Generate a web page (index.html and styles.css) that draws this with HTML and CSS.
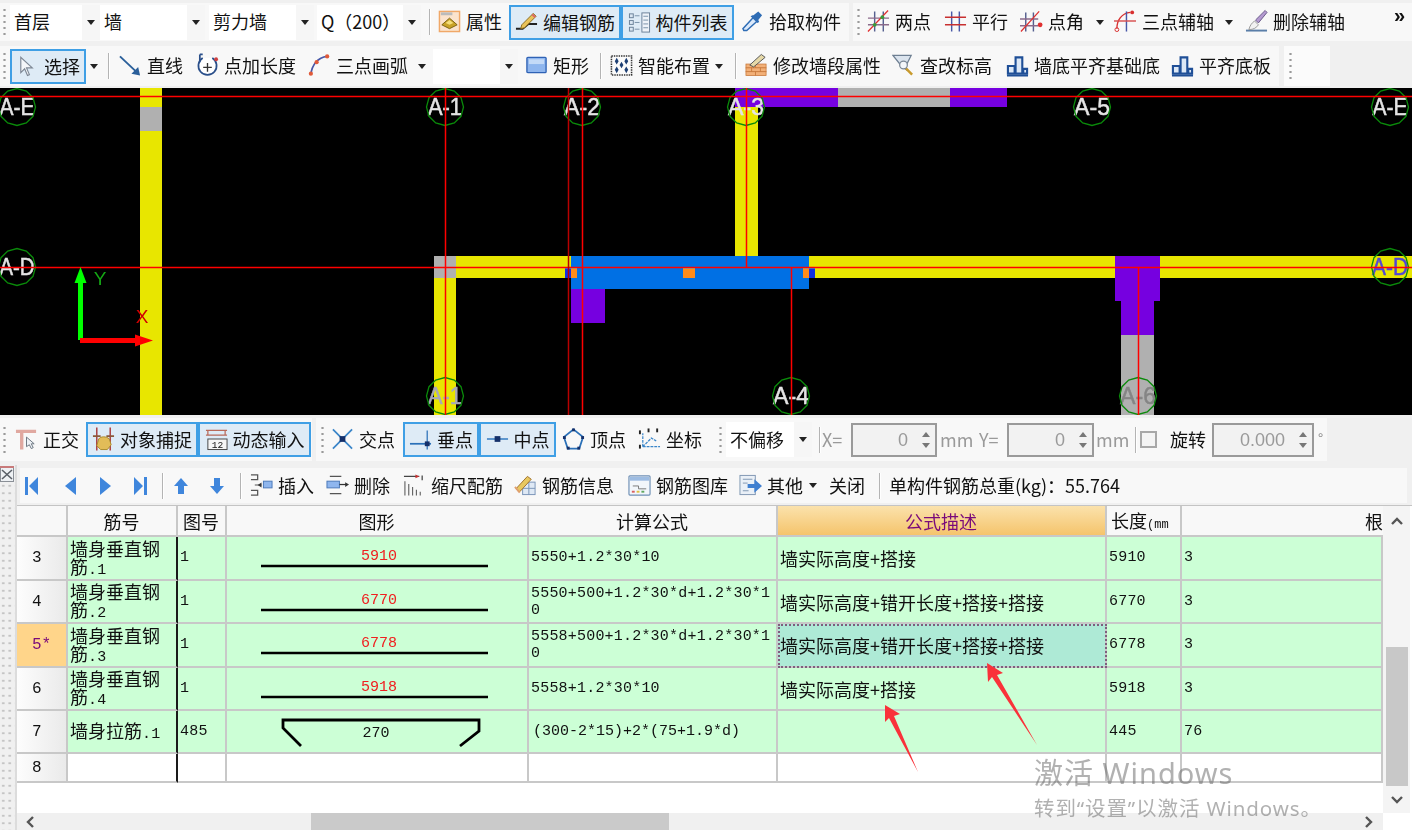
FILE: index.html
```html
<!DOCTYPE html>
<html lang="zh-CN">
<head>
<meta charset="utf-8">
<title>钢筋编辑</title>
<link rel="stylesheet" href="styles.css">
</head>
<body>
<svg class="sprite" xmlns="http://www.w3.org/2000/svg">
  <symbol id="i-prop" viewBox="0 0 24 24"><rect x="1.500" y="2" width="21" height="21" fill="#fbe3cd" stroke="#f0a868" stroke-width="1.500"/><rect x="3" y="3" width="12" height="3" fill="#bbb"/><path d="M4 16l8-7 8 7-8 4z" fill="#c9a227" stroke="#7a6212"/><path d="M8 14l4-3 4 3-4 2z" fill="#f4de7a"/></symbol>
  <symbol id="i-edit" viewBox="0 0 24 24"><path d="M1 19h7l6-5h9" fill="none" stroke="#222" stroke-width="2"/><path d="M7 15L19 3l3 3-12 12-4 1z" fill="#e9c35a" stroke="#8a6a1a"/><path d="M18 4l3 3" stroke="#d66" stroke-width="2"/></symbol>
  <symbol id="i-list" viewBox="0 0 24 24"><g fill="#dbe7f3" stroke="#6a8098"><rect x="1.500" y="3.500" width="4" height="4"/><rect x="1.500" y="10.500" width="4" height="4"/><rect x="1.500" y="17.500" width="4" height="4"/></g><rect x="14.500" y="2.500" width="8" height="20" fill="#eef3f9" stroke="#6a8098"/><path d="M7 5.500h5M7 12.500h5M7 19.500h5M16 6h5M16 10h5M16 14h5M16 18h5" stroke="#7890a8"/></symbol>
  <symbol id="i-pick" viewBox="0 0 24 24"><path d="M3 22l-1-2L13 8l4 4L6 22z" fill="#dbe9fa" stroke="#2f6db5" stroke-width="1.500"/><path d="M13 6l5-4 4 4-4 5 1 2-2 1-7-7 2-1z" fill="#2f6db5"/></symbol>
  <symbol id="i-two" viewBox="0 0 24 24"><path d="M8 2v21M17 2v21" stroke="#56608f" stroke-width="1.500"/><path d="M1 9h22M1 16h22" stroke="#8a6a8a" stroke-width="1.500"/><path d="M1 23L22 1" stroke="#e03030" stroke-width="1.300"/><circle cx="8" cy="16" r="2" fill="#3a9a3a"/><circle cx="16" cy="8" r="2" fill="#3a9a3a"/></symbol>
  <symbol id="i-par" viewBox="0 0 24 24"><path d="M8 2v21M16 2v21" stroke="#4858a8" stroke-width="1.500"/><path d="M1 8h22M1 16h22" stroke="#c83030" stroke-width="1.500"/></symbol>
  <symbol id="i-ang" viewBox="0 0 24 24"><path d="M6 3v20M14 3v20" stroke="#56608f" stroke-width="1.500"/><path d="M0 10h19M0 17h19" stroke="#8a6a8a" stroke-width="1.500"/><path d="M1 23L20 2" stroke="#e03030" stroke-width="1.300"/><circle cx="21" cy="16" r="2.500" fill="#e03030"/></symbol>
  <symbol id="i-aux" viewBox="0 0 24 24"><path d="M3 20C3 11 8 4 17 3" fill="none" stroke="#d83030" stroke-width="1.500"/><circle cx="3" cy="21" r="2" fill="none" stroke="#d83030"/><circle cx="19" cy="3" r="2" fill="#d83030"/><path d="M13 2v21" stroke="#4858a8" stroke-width="1.500"/><path d="M0 12h23" stroke="#d85050" stroke-width="1.500"/></symbol>
  <symbol id="i-del" viewBox="0 0 24 24"><path d="M1 22h22" stroke="#5a7ea8" stroke-width="2"/><path d="M4 21c1-4 3-7 6-9l4 4c-2 3-5 5-10 5z" fill="#f2f2f2" stroke="#9a9a9a"/><path d="M11 11L21 1l2 2-9 11z" fill="#b49ad0" stroke="#6a5a8a"/></symbol>
  <symbol id="i-sel" viewBox="0 0 24 24"><path d="M5 3v16l4-4 3 7 2-1-3-7h6z" fill="#f4f6f9" stroke="#7d8794" stroke-width="1.200"/></symbol>
  <symbol id="i-line" viewBox="0 0 24 24"><path d="M1 3l18 17" stroke="#2a5f9a" stroke-width="2"/><path d="M22 23l-9-2 7-7z" fill="#2a5f9a"/></symbol>
  <symbol id="i-plen" viewBox="0 0 24 24"><path d="M7 4.800A9.500 9.500 0 1 0 17 4.800" fill="#fff" stroke="#2a4f8a" stroke-width="1.800"/><path d="M12 10v9M7.500 14.500h9" stroke="#333" stroke-width="1.400"/><path d="M4 1v8M4 1h3" stroke="#2a4f8a" stroke-width="1.800"/><circle cx="21" cy="6" r="2" fill="#d04040"/></symbol>
  <symbol id="i-arc" viewBox="0 0 24 24"><path d="M3 22C4 12 10 4 20 3" fill="none" stroke="#4858a8" stroke-width="1.800"/><circle cx="3" cy="21" r="2.200" fill="#e05a3a"/><circle cx="9" cy="9" r="2.200" fill="#e05a3a"/><circle cx="20" cy="3" r="2.200" fill="#e05a3a"/></symbol>
  <symbol id="i-rect" viewBox="0 0 24 24"><rect x="2" y="4" width="20" height="16" rx="1" fill="#8fb6ee" stroke="#2f62b5" stroke-width="1.400"/><rect x="4" y="6" width="16" height="5" fill="#c4daf7"/></symbol>
  <symbol id="i-smart" viewBox="0 0 24 24"><rect x="1.500" y="2.500" width="21" height="20" fill="#fbfbfb" stroke="#333" stroke-width="1.600" stroke-dasharray="1.500 1"/><path d="M7 4.500l2 3.500-2 3.500L5 8zM17 4.500l2 3.500-2 3.500L15 8zM7 13.500l2 3.500-2 3.500L5 17zM17 13.500l2 3.500-2 3.500L15 17zM12 8.500l2 3.500-2 3.500-2-3.500z" fill="#1d3f73"/></symbol>
  <symbol id="i-wall" viewBox="0 0 24 24"><g fill="#f2b078" stroke="#c8783a" stroke-width=".8"><rect x="1" y="11" width="10" height="4"/><rect x="11" y="11" width="11" height="4"/><rect x="1" y="15" width="6" height="4"/><rect x="7" y="15" width="9" height="4"/><rect x="16" y="15" width="6" height="4"/><rect x="1" y="19" width="10" height="4"/><rect x="11" y="19" width="11" height="4"/></g><path d="M5 12L17 1l4 3L9 14z" fill="#e6d9a8" stroke="#555"/></symbol>
  <symbol id="i-elev" viewBox="0 0 24 24"><path d="M1 2h19l-5 10v5l-6-5z" fill="#dbe4ee" stroke="#6e7f92" stroke-width="1.300"/><path d="M14 15l7 7" stroke="#c89a2c" stroke-width="2.600"/><circle cx="12" cy="12" r="4" fill="#f3f6fa" stroke="#7a8796" stroke-width="1.300"/></symbol>
  <symbol id="i-align" viewBox="0 0 24 24"><path d="M1 23h22" stroke="#1f4f97" stroke-width="2"/><path d="M2 21v-8h7v8zM10 21V4h7v17zM18 21v-5h4v5z" fill="#dce8f6" stroke="#1f4f97" stroke-width="2.200"/></symbol>
  <symbol id="i-ortho" viewBox="0 0 24 24"><path d="M1 4h21M7 4v19" stroke="#e0a8a0" stroke-width="3.500"/><path d="M12 10v10l3-2 2 4 2-1-2-4h3z" fill="#eef2f6" stroke="#6a7480"/></symbol>
  <symbol id="i-snap" viewBox="0 0 24 24"><path d="M5 0v24M19 0v24" stroke="#a83a3a" stroke-width="1.500"/><path d="M1 9h8M15 9h8" stroke="#8a5a3a" stroke-width="2"/><path d="M7 12c2-3 8-3 11 0l2 6-4 5H9l-4-4z" fill="#e2bc58" stroke="#a98a2c"/></symbol>
  <symbol id="i-dyn" viewBox="0 0 24 24"><path d="M1 3h22M1 8h22M3 3v5M21 3v5" stroke="#b86a5a" stroke-width="1.300"/><rect x="3" y="12" width="20" height="11" fill="#f6f6f6" stroke="#444"/><text x="13" y="21.500" font-size="10" text-anchor="middle" font-family="Liberation Mono, monospace" fill="#111">12</text></symbol>
  <symbol id="i-cross" viewBox="0 0 24 24"><path d="M2 2l20 20M22 2L2 22" stroke="#3b86c9" stroke-width="1.800"/><rect x="9" y="9" width="6" height="6" fill="#15306a"/></symbol>
  <symbol id="i-perp" viewBox="0 0 24 24"><path d="M1 17h22" stroke="#2a70b8" stroke-width="1.800"/><path d="M19 3v20" stroke="#2a70b8" stroke-width="1.300"/><rect x="16.500" y="14.500" width="5" height="5" fill="#15306a"/></symbol>
  <symbol id="i-mid" viewBox="0 0 24 24"><path d="M1 12h22" stroke="#4a8ac8" stroke-width="1.800"/><rect x="9" y="9" width="6" height="6" fill="#15306a"/></symbol>
  <symbol id="i-vert" viewBox="0 0 24 24"><path d="M12 2l10 8-4 12H6L2 10z" fill="none" stroke="#2a70b8" stroke-width="1.800"/><g fill="#15306a"><rect x="10.500" y="1" width="3" height="3"/><rect x="1" y="9" width="3" height="3"/><rect x="20" y="9" width="3" height="3"/><rect x="5" y="20" width="3" height="3"/><rect x="16" y="20" width="3" height="3"/></g></symbol>
  <symbol id="i-coord" viewBox="0 0 24 24"><path d="M5 20h18M5 20V6M5 20l9-9 5 3" fill="none" stroke="#3b86c9" stroke-width="1.300" stroke-dasharray="3 1"/><g fill="#222"><rect x="1" y="3" width="2" height="4"/><rect x="10" y="1" width="2" height="4"/><rect x="19" y="1" width="2" height="4"/><rect x="1" y="18" width="2" height="4"/></g></symbol>
  <symbol id="i-ins" viewBox="0 0 24 24"><path d="M1 1.500h7v5H1M1 17.500h7v5H1M5 12h7" fill="none" stroke="#555" stroke-width="1.300"/><path d="M8 12l4-2.500v5z" fill="#333"/><rect x="14" y="8" width="9" height="7" fill="#8fb6ee" stroke="#4a78b8"/></symbol>
  <symbol id="i-rem" viewBox="0 0 24 24"><path d="M4 3h12M4 21h12" stroke="#555" stroke-width="1.300"/><rect x="1" y="8" width="13" height="7" fill="#8fb6ee" stroke="#4a78b8"/><path d="M14 11.500h7" stroke="#333" stroke-width="1.300"/><path d="M24 11.500l-4-2.500v5z" fill="#333"/></symbol>
  <symbol id="i-scale" viewBox="0 0 24 24"><path d="M1 3h16M20 2v5" stroke="#444" stroke-width="1.300"/><path d="M17 3l-4-2v4z" fill="#c83030"/><path d="M2 8v15M6 11v12M10 14v9M14 17v6M18 19v4" stroke="#666" stroke-width="1.200"/></symbol>
  <symbol id="i-info" viewBox="0 0 24 24"><rect x="9" y="9" width="13" height="13" fill="#dfe9f5" stroke="#7a94b8"/><path d="M15.500 9v13M9 15.500h13" stroke="#7a94b8"/><path d="M2 16L14 3l4 3L6 19z" fill="#e8c860" stroke="#a0702a"/><path d="M1 14l5 6" stroke="#e0a070" stroke-width="2"/></symbol>
  <symbol id="i-lib" viewBox="0 0 24 24"><rect x="1" y="2.500" width="22" height="20" rx="1" fill="#f2f6fb" stroke="#6e8fb5" stroke-width="1.200"/><rect x="2" y="3.500" width="20" height="4" fill="#9dbce2"/><path d="M5 13h6v3h8" fill="none" stroke="#777"/><path d="M4 19h3" stroke="#d86060" stroke-width="2"/><path d="M9 19h3" stroke="#e0c040" stroke-width="2"/><path d="M14 19h3" stroke="#60a860" stroke-width="2"/></symbol>
  <symbol id="i-other" viewBox="0 0 24 24"><rect x="1" y="2" width="16" height="20" fill="#eaf0f7" stroke="#7f96b2"/><path d="M4 6h10M4 10h5M4 18h6" stroke="#7f96b2"/><path d="M9 11h7V6l8 7-8 7v-5H9z" fill="#3f7fd0"/></symbol>
  <symbol id="i-first" viewBox="0 0 13 18"><path d="M0 0h3v18H0zM13 0v18L4 9z" fill="#3f86dc"/></symbol>
  <symbol id="i-prev" viewBox="0 0 11 18"><path d="M11 0v18L0 9z" fill="#3f86dc"/></symbol>
  <symbol id="i-next" viewBox="0 0 11 18"><path d="M0 0v18L11 9z" fill="#3f86dc"/></symbol>
  <symbol id="i-last" viewBox="0 0 13 18"><path d="M0 0v18L9 9zM10 0h3v18h-3z" fill="#3f86dc"/></symbol>
  <symbol id="i-up" viewBox="0 0 14 16"><path d="M7 0l7 8H10v8H4V8H0z" fill="#3f86dc"/></symbol>
  <symbol id="i-down" viewBox="0 0 14 16"><path d="M7 16l7-8H10V0H4v8H0z" fill="#3f86dc"/></symbol>
  <symbol id="i-closex" viewBox="0 0 14 16"><rect x=".5" y=".5" width="13" height="15" fill="#eef1f4" stroke="#8a8f96"/><path d="M2 4l10 9M12 4L2 13" stroke="#5a6068" stroke-width="1.600"/><path d="M0 1h14" stroke="#c87a7a" stroke-width="2"/></symbol>
  <symbol id="axis" viewBox="-19 -19 38 38" overflow="visible"><polygon points="18.500,0 16,9.300 9.300,16 0,18.500 -9.300,16 -16,9.300 -18.500,0 -16,-9.300 -9.300,-16 0,-18.500 9.300,-16 16,-9.300" fill="none" stroke="#0a8a0a" stroke-width="1.300"/></symbol>
</svg>

<div class="app">
  <header class="top">
    <div class="row row-a">
      <div class="strip strip-a1">
        <span class="grip ml3"></span>
        <div class="combo w90 ml4"><span class="combo-t">首层</span><span class="combo-d"><i class="caret"></i></span></div>
        <div class="combo w105"><span class="combo-t">墙</span><span class="combo-d"><i class="caret"></i></span></div>
        <div class="combo w105 ml4"><span class="combo-t">剪力墙</span><span class="combo-d"><i class="caret"></i></span></div>
        <div class="combo w104 ml3"><span class="combo-t">Q（200）</span><span class="combo-d"><i class="caret"></i></span></div>
        <span class="sep ml8"></span>
        <div class="tool ml7"><svg class="ic"><use href="#i-prop"/></svg>属性</div>
        <div class="tool on w112 ml7"><svg class="ic"><use href="#i-edit"/></svg>编辑钢筋</div>
        <div class="tool on w113"><svg class="ic"><use href="#i-list"/></svg>构件列表</div>
        <div class="tool ml7"><svg class="ic"><use href="#i-pick"/></svg>拾取构件</div>
      </div>
      <div class="strip strip-a2 ml4">
        <span class="grip ml4"></span>
        <div class="tool ml7"><svg class="ic"><use href="#i-two"/></svg>两点</div>
        <div class="tool ml13"><svg class="ic"><use href="#i-par"/></svg>平行</div>
        <div class="tool ml12"><svg class="ic"><use href="#i-ang"/></svg>点角</div>
        <i class="caret ml12"></i>
        <div class="tool ml10"><svg class="ic"><use href="#i-aux"/></svg>三点辅轴</div>
        <i class="caret ml11"></i>
        <div class="tool ml12"><svg class="ic"><use href="#i-del"/></svg>删除辅轴</div>
        <span class="more">»</span>
      </div>
    </div>
    <div class="row row-b">
      <div class="strip strip-b1">
        <span class="grip ml3"></span>
        <div class="tool on w76 ml4"><svg class="ic"><use href="#i-sel"/></svg>选择</div>
        <i class="caret ml4"></i>
        <span class="sep ml10"></span>
        <div class="tool ml9"><svg class="ic"><use href="#i-line"/></svg>直线</div>
        <div class="tool ml13"><svg class="ic"><use href="#i-plen"/></svg>点加长度</div>
        <div class="tool ml12"><svg class="ic"><use href="#i-arc"/></svg>三点画弧</div>
        <i class="caret ml10"></i>
        <div class="combo w85 ml7"><span class="combo-t"></span><span class="combo-d"><i class="caret"></i></span></div>
        <div class="tool ml7"><svg class="ic"><use href="#i-rect"/></svg>矩形</div>
        <span class="sep ml11"></span>
        <div class="tool ml8"><svg class="ic"><use href="#i-smart"/></svg>智能布置</div>
        <i class="caret ml5"></i>
        <span class="sep ml12"></span>
        <div class="tool ml8"><svg class="ic"><use href="#i-wall"/></svg>修改墙段属性</div>
        <div class="tool ml11"><svg class="ic"><use href="#i-elev"/></svg>查改标高</div>
        <div class="tool ml14"><svg class="ic"><use href="#i-align"/></svg>墙底平齐基础底</div>
        <div class="tool ml11"><svg class="ic"><use href="#i-align"/></svg>平齐底板</div>
      </div>
      <div class="strip strip-b2 ml5"><span class="grip ml5"></span></div>
    </div>
  </header>

  <svg class="canvas" xmlns="http://www.w3.org/2000/svg" viewBox="0 0 1412 327" width="1412" height="327">
    <rect width="1412" height="327" fill="#000"/>
    <g fill="#e8e600">
      <rect x="140" y="0" width="22" height="327"/>
      <rect x="434" y="168" width="22" height="159"/>
      <rect x="434" y="168" width="137" height="22"/>
      <rect x="735" y="19" width="23" height="149"/>
      <rect x="809" y="168" width="603" height="22"/>
    </g>
    <g fill="#b0b0b0">
      <rect x="140" y="19" width="22" height="24"/>
      <rect x="434" y="168" width="22" height="22"/>
      <rect x="838" y="0" width="112" height="19"/>
      <rect x="1121" y="247" width="33" height="80"/>
    </g>
    <g fill="#7600e0">
      <rect x="735" y="0" width="103" height="19"/>
      <rect x="950" y="0" width="57" height="19"/>
      <rect x="571" y="201" width="34" height="34"/>
      <rect x="1115" y="168" width="45" height="45"/>
      <rect x="1121" y="213" width="33" height="34"/>
    </g>
    <rect x="571" y="168" width="238" height="33" fill="#0070e4"/>
    <g fill="#ff8c1a">
      <rect x="571" y="179" width="6" height="11"/>
      <rect x="683" y="179" width="12" height="11"/>
      <rect x="803" y="179" width="6" height="11"/>
    </g>
    <rect x="565" y="179" width="6" height="11" fill="#1030e0"/>
    <rect x="809" y="179" width="6" height="11" fill="#1030e0"/>
    <g fill="#20e0f0">
      <rect x="565" y="179" width="12" height="1.500"/>
      <rect x="683" y="179" width="12" height="1.500"/>
      <rect x="803" y="179" width="12" height="1.500"/>
    </g>

    <g class="cad-label">
      <text x="17" y="27" textLength="35" lengthAdjust="spacingAndGlyphs">A-E</text>
      <text x="445" y="27" textLength="34" lengthAdjust="spacingAndGlyphs">A-1</text>
      <text x="582" y="27" textLength="36" lengthAdjust="spacingAndGlyphs">A-2</text>
      <text x="746" y="27" textLength="36" lengthAdjust="spacingAndGlyphs">A-3</text>
      <text x="1092" y="27" textLength="36" lengthAdjust="spacingAndGlyphs">A-5</text>
      <text x="1390" y="27" textLength="35" lengthAdjust="spacingAndGlyphs">A-E</text>
      <text x="17" y="187" textLength="35" lengthAdjust="spacingAndGlyphs">A-D</text>
      <text x="791" y="316" textLength="36" lengthAdjust="spacingAndGlyphs">A-4</text>
      <text x="445" y="316" textLength="34" lengthAdjust="spacingAndGlyphs" class="cad-grey">A-1</text>
      <text x="1138" y="316" textLength="36" lengthAdjust="spacingAndGlyphs" class="cad-dim">A-6</text>
      <text x="1390" y="187" textLength="36" lengthAdjust="spacingAndGlyphs" class="cad-blue">A-D</text>
    </g>
    <g>
      <use href="#axis" x="-2" y="0" width="38" height="38"/>
      <use href="#axis" x="426" y="0" width="38" height="38"/>
      <use href="#axis" x="563" y="0" width="38" height="38"/>
      <use href="#axis" x="727" y="0" width="38" height="38"/>
      <use href="#axis" x="1073" y="0" width="38" height="38"/>
      <use href="#axis" x="1371" y="0" width="38" height="38"/>
      <use href="#axis" x="-2" y="160" width="38" height="38"/>
      <use href="#axis" x="1371" y="160" width="38" height="38"/>
      <use href="#axis" x="426" y="289" width="38" height="38"/>
      <use href="#axis" x="772" y="289" width="38" height="38"/>
      <use href="#axis" x="1119" y="289" width="38" height="38"/>
    </g>
    <g stroke="#ff0000" stroke-width="1.500">
      <path d="M0 8.500h1412M0 179.500h1412"/>
      <path d="M445.500 0v327M582.500 0v327M746.500 0v179M791.500 179v148M1138.500 179v148"/>
    </g>
    <path d="M568.500 0v327" stroke="#b80000" stroke-width="1.500"/>

    <path d="M78 252V194h5v58z" fill="#00ff00"/>
    <path d="M80.500 179l6 16h-12z" fill="#00ff00"/>
    <path d="M80 250h56v5H80z" fill="#ff0000"/>
    <path d="M153 252.500l-18 6v-12z" fill="#ff0000"/>
    <text class="axis-y" x="100" y="197">Y</text>
    <text class="axis-x" x="142" y="235">X</text>
  </svg>

  <section class="snapbar">
    <div class="strip strip-s1">
      <span class="grip ml3"></span>
      <div class="tool ml9"><svg class="ic"><use href="#i-ortho"/></svg>正交</div>
      <div class="tool on w112 ml7"><svg class="ic"><use href="#i-snap"/></svg>对象捕捉</div>
      <div class="tool on w113"><svg class="ic"><use href="#i-dyn"/></svg>动态输入</div>
    </div>
    <div class="strip strip-s2 ml4">
      <span class="grip ml5"></span>
      <div class="tool ml7"><svg class="ic"><use href="#i-cross"/></svg>交点</div>
      <div class="tool on w76 ml8"><svg class="ic"><use href="#i-perp"/></svg>垂点</div>
      <div class="tool on w77"><svg class="ic"><use href="#i-mid"/></svg>中点</div>
      <div class="tool ml6"><svg class="ic"><use href="#i-vert"/></svg>顶点</div>
      <div class="tool ml12"><svg class="ic"><use href="#i-coord"/></svg>坐标</div>
      <span class="grip ml17"></span>
      <div class="combo w86 ml4"><span class="combo-t">不偏移</span><span class="combo-d"><i class="caret"></i></span></div>
      <span class="sep ml7"></span>
      <span class="dim w25 ml1">X=</span>
      <div class="spin w86 ml4"><span class="spin-v">0</span><span class="spin-b"><i class="up"></i><i class="dn"></i></span></div>
      <span class="dim w32 ml3">mm</span>
      <span class="dim w24 ml7">Y=</span>
      <div class="spin w87 ml4"><span class="spin-v">0</span><span class="spin-b"><i class="up"></i><i class="dn"></i></span></div>
      <span class="dim w32 ml2">mm</span>
      <span class="sep ml7"></span>
      <span class="check ml3"></span>
      <span class="label ml13">旋转</span>
      <div class="spin w102 ml6"><span class="spin-v">0.000</span><span class="spin-b"><i class="up"></i><i class="dn"></i></span></div>
      <span class="deg ml4">°</span>
    </div>
  </section>

  <section class="dock">
    <aside class="dock-grip"><svg class="dock-x"><use href="#i-closex"/></svg></aside>
    <div class="dock-main">
      <div class="strip strip-nav ml3">
        <svg class="nav w13 ml5"><use href="#i-first"/></svg>
        <svg class="nav w11 ml27"><use href="#i-prev"/></svg>
        <svg class="nav w11 ml24"><use href="#i-next"/></svg>
        <svg class="nav w13 ml23"><use href="#i-last"/></svg>
        <span class="sep ml15"></span>
        <svg class="nav w14 ml10"><use href="#i-up"/></svg>
        <svg class="nav w14 ml22"><use href="#i-down"/></svg>
        <span class="sep ml16"></span>
        <div class="tool ml8"><svg class="ic"><use href="#i-ins"/></svg>插入</div>
        <div class="tool ml12"><svg class="ic"><use href="#i-rem"/></svg>删除</div>
        <div class="tool ml13"><svg class="ic"><use href="#i-scale"/></svg>缩尺配筋</div>
        <div class="tool ml11"><svg class="ic"><use href="#i-info"/></svg>钢筋信息</div>
        <div class="tool ml14"><svg class="ic"><use href="#i-lib"/></svg>钢筋图库</div>
        <div class="tool ml11"><svg class="ic"><use href="#i-other"/></svg>其他</div>
        <i class="caret ml6"></i>
        <div class="tool ml12">关闭</div>
        <span class="sep ml14"></span>
        <span class="label total ml8">单构件钢筋总重(kg)：55.764</span>
      </div>

      <div class="grid-frame">
        <div class="grid-body">
          <div class="grid-view">
            <table class="sheet">
              <colgroup>
                <col class="c0"><col class="c1"><col class="c2"><col class="c3"><col class="c4"><col class="c5"><col class="c6"><col class="c7">
              </colgroup>
              <thead>
                <tr>
                  <th></th><th>筋号</th><th>图号</th><th>图形</th><th>计算公式</th>
                  <th class="active">公式描述</th>
                  <th class="th-left">长度<small>(mm</small></th>
                  <th class="th-right">根</th>
                </tr>
              </thead>
              <tbody>
                <tr class="r44">
                  <td class="rh">3</td><td class="name">墙身垂直钢筋<span class="n">.1</span></td><td class="n">1</td>
                  <td class="shape"><svg viewBox="0 0 300 42" width="300" height="42"><text class="dim-red" x="152" y="23">5910</text><path d="M34 29h227" stroke="#000" stroke-width="2.600"/></svg></td>
                  <td class="n">5550+1.2*30*10</td><td>墙实际高度+搭接</td><td class="n">5910</td><td class="n">3</td>
                </tr>
                <tr class="r43">
                  <td class="rh">4</td><td class="name">墙身垂直钢筋<span class="n">.2</span></td><td class="n">1</td>
                  <td class="shape"><svg viewBox="0 0 300 41" width="300" height="41"><text class="dim-red" x="152" y="23">6770</text><path d="M34 29h227" stroke="#000" stroke-width="2.600"/></svg></td>
                  <td class="n formula">5550+500+1.2*30*d+1.2*30*10</td><td>墙实际高度+错开长度+搭接+搭接</td><td class="n">6770</td><td class="n">3</td>
                </tr>
                <tr class="r44">
                  <td class="rh cur">5*</td><td class="name">墙身垂直钢筋<span class="n">.3</span></td><td class="n">1</td>
                  <td class="shape"><svg viewBox="0 0 300 42" width="300" height="42"><text class="dim-red" x="152" y="23">6778</text><path d="M34 29h227" stroke="#000" stroke-width="2.600"/></svg></td>
                  <td class="n formula">5558+500+1.2*30*d+1.2*30*10</td><td class="focus">墙实际高度+错开长度+搭接+搭接</td><td class="n">6778</td><td class="n">3</td>
                </tr>
                <tr class="r43">
                  <td class="rh">6</td><td class="name">墙身垂直钢筋<span class="n">.4</span></td><td class="n">1</td>
                  <td class="shape"><svg viewBox="0 0 300 41" width="300" height="41"><text class="dim-red" x="152" y="23">5918</text><path d="M34 29h227" stroke="#000" stroke-width="2.600"/></svg></td>
                  <td class="n">5558+1.2*30*10</td><td>墙实际高度+搭接</td><td class="n">5918</td><td class="n">3</td>
                </tr>
                <tr class="r43">
                  <td class="rh">7</td><td class="name">墙身拉筋<span class="n">.1</span></td><td class="n">485</td>
                  <td class="shape"><svg viewBox="0 0 300 41" width="300" height="41"><path d="M74 35L56 17V9h196v11l-19 15" fill="none" stroke="#000" stroke-width="2.800"/><text class="dim-blk" x="149" y="26">270</text></svg></td>
                  <td class="n tight">(300-2*15)+2*(75+1.9*d)</td><td></td><td class="n">445</td><td class="n">76</td>
                </tr>
                <tr class="r29 blank">
                  <td class="rh">8</td><td class="name"></td><td></td><td></td><td></td><td></td><td></td><td></td>
                </tr>
              </tbody>
            </table>
          </div>
          <div class="vscroll">
            <svg class="chev chev-up" viewBox="0 0 14 10"><path d="M2 8l5-5 5 5" fill="none" stroke="#555" stroke-width="2.400"/></svg>
            <div class="thumb-v"></div>
            <svg class="chev chev-dn" viewBox="0 0 14 10"><path d="M2 2l5 5 5-5" fill="none" stroke="#555" stroke-width="2.400"/></svg>
          </div>
        </div>
        <div class="hscroll">
          <svg class="chev-h chev-l" viewBox="0 0 10 14"><path d="M8 2L3 7l5 5" fill="none" stroke="#555" stroke-width="2.400"/></svg>
          <div class="thumb-h"></div>
          <svg class="chev-h chev-r" viewBox="0 0 10 14"><path d="M2 2l5 5-5 5" fill="none" stroke="#555" stroke-width="2.400"/></svg>
        </div>
      </div>
    </div>
  </section>

  <svg class="marks" xmlns="http://www.w3.org/2000/svg" viewBox="0 0 1412 830" width="1412" height="830">
    <polygon points="987,663 1003,673 997,675 1037,745 992,677 988,682" fill="#f9323a"/>
    <polygon points="885,705 900,714 894,716 918,772 889,718 885,722" fill="#f9323a"/>
  </svg>
  <div class="watermark">
    <div class="wm-1">激活 Windows</div>
    <div class="wm-2">转到“设置”以激活 Windows。</div>
  </div>
</div>
</body>
</html>
```

FILE: styles.css
```css
* { box-sizing: border-box; }
html, body { margin: 0; padding: 0; height: 100%; overflow: hidden; background: #f0f0f0; }
body {
  font-family: "Noto Sans CJK SC", "Noto Sans", "Liberation Sans", sans-serif;
  font-size: 18px;
  color: #111;
}
.sprite { display: none; }
.app { position: relative; width: 1412px; height: 830px; overflow: hidden; filter: blur(.3px); }

/* toolbars */
.top { padding-top: 3px; height: 88px; }
.row { display: flex; }
.row-a { height: 38px; }
.row-b { height: 42px; margin-top: 5px; padding-bottom: 2px; }
.strip { display: flex; align-items: center; background: #f8f8f8; height: 100%; white-space: nowrap; line-height: 1; }
.strip-a1 { width: 849px; }
.strip-a2 { width: 559px; }
.strip-b1 { width: 1279px; }
.strip-b2 { width: 46px; background: #fbfbfb; }
.grip {
  flex: none; width: 3px; height: 30px;
  background: radial-gradient(circle, #9a9a9a 1px, transparent 1.300px) 0 0 / 3px 6px;
}
.sep { flex: none; width: 2px; height: 26px; border-left: 1px solid #b4b4b4; border-right: 1px solid #fff; }
.tool { flex: none; display: flex; align-items: center; justify-content: center; gap: 5px; height: 100%; padding-bottom: 2px; }
.ic { flex: none; width: 23px; height: 24px; }
.on { background: #deebf6; border: 2px solid #3f9fe5; height: 35px; padding-bottom: 1px; }
.caret { flex: none; display: block; width: 8px; height: 5px; border-left: 4px solid transparent; border-right: 4px solid transparent; border-top: 5px solid #222; }
.combo { flex: none; display: flex; height: 35px; background: #fff; }
.combo-t { flex: 1; display: flex; align-items: center; padding: 0 0 2px 4px; min-width: 0; }
.combo-d { flex: none; width: 18px; background: #f6f6f6; display: flex; align-items: center; justify-content: center; }
.more { margin-left: auto; margin-right: 7px; align-self: flex-start; margin-top: 2px; font-weight: 700; font-family: "Liberation Sans", sans-serif; font-size: 20px; color: #111; }

.w13 { width: 13px; } .w11 { width: 11px; } .w14 { width: 14px; }
.w24 { width: 24px; } .w25 { width: 25px; } .w32 { width: 32px; }
.w76 { width: 76px; } .w77 { width: 77px; } .w85 { width: 85px; } .w86 { width: 86px; } .w87 { width: 87px; }
.w90 { width: 90px; } .w102 { width: 102px; } .w104 { width: 104px; } .w105 { width: 105px; }
.w112 { width: 112px; } .w113 { width: 113px; }

.ml1 { margin-left: 1px; } .ml2 { margin-left: 2px; } .ml3 { margin-left: 3px; } .ml4 { margin-left: 4px; }
.ml5 { margin-left: 5px; } .ml6 { margin-left: 6px; } .ml7 { margin-left: 7px; } .ml8 { margin-left: 8px; }
.ml9 { margin-left: 9px; } .ml10 { margin-left: 10px; } .ml11 { margin-left: 11px; } .ml12 { margin-left: 12px; }
.ml13 { margin-left: 13px; } .ml14 { margin-left: 14px; } .ml15 { margin-left: 15px; } .ml16 { margin-left: 16px; }
.ml17 { margin-left: 17px; } .ml22 { margin-left: 22px; } .ml23 { margin-left: 23px; } .ml24 { margin-left: 24px; }
.ml27 { margin-left: 27px; }

/* CAD canvas */
.canvas { display: block; }
.cad-label text { font-family: "Liberation Sans", sans-serif; font-size: 23px; fill: #e4e4e4; stroke: #e4e4e4; stroke-width: .5px; text-anchor: middle; }
.cad-label .cad-grey { fill: #a8a8b8; stroke: #a8a8b8; }
.cad-label .cad-dim { fill: #858585; stroke: #858585; }
.cad-label .cad-blue { fill: #5146d8; stroke: #5146d8; }
.axis-y, .axis-x { font-family: "Liberation Sans", sans-serif; font-size: 19px; text-anchor: middle; }
.axis-y { fill: #14a814; }
.axis-x { fill: #d00000; }

/* snap bar */
.snapbar { display: flex; height: 50px; padding: 3px 0 4px; }
.strip-s1 { width: 312px; }
.strip-s2 { width: 1011px; }
.dim { flex: none; color: #9a9a9a; font-size: 18px; padding-bottom: 2px; }
.label { flex: none; padding-bottom: 2px; }
.spin { flex: none; display: flex; height: 34px; border: 2px solid #9a9a9a; background: #f2f2f2; color: #9a9a9a; }
.spin-v { flex: 1; display: flex; align-items: center; justify-content: flex-end; padding-right: 9px; font-family: "Liberation Sans", sans-serif; }
.spin-b { flex: none; width: 18px; display: flex; flex-direction: column; align-items: center; justify-content: space-around; padding: 4px 0; }
.spin-b .up { display: block; width: 0; height: 0; border-left: 4px solid transparent; border-right: 4px solid transparent; border-bottom: 5px solid #777; }
.spin-b .dn { display: block; width: 0; height: 0; border-left: 4px solid transparent; border-right: 4px solid transparent; border-top: 5px solid #777; }
.check { flex: none; width: 17px; height: 17px; border: 2px solid #a8a8a8; background: #f4f4f4; }
.deg { flex: none; color: #888; align-self: flex-start; margin-top: 13px; font-size: 14px; }

/* dock */
.dock { display: flex; height: 365px; }
.dock-grip {
  flex: none; width: 17px; position: relative;
  border-right: 2px solid #dcdcdc;
  background: radial-gradient(circle, #c2c2c2 1px, transparent 1.300px) 0 17px / 6.500px 7.500px #f0f0f0;
}
.dock-x { display: block; width: 14px; height: 16px; margin-top: 1px; }
.dock-main { flex: 1; min-width: 0; display: flex; flex-direction: column; padding-top: 3px; }
.strip-nav { flex: none; width: 1387px; height: 35px; }
.nav { flex: none; height: 18px; }

/* grid */
.grid-frame { flex: none; margin-top: 2px; height: 325px; border-top: 1px solid #c4c4c4; display: flex; flex-direction: column; background: #fff; }
.grid-body { flex: none; height: 307px; display: flex; }
.grid-view { flex: none; width: 1366px; overflow: hidden; }
.sheet { width: 1366px; table-layout: fixed; border-collapse: separate; border-spacing: 0; line-height: 18px; }
.c0 { width: 51px; } .c1 { width: 110px; } .c2 { width: 49px; } .c3 { width: 302px; }
.c4 { width: 249px; } .c5 { width: 329px; } .c6 { width: 75px; } .c7 { width: 201px; }
.sheet th, .sheet td { border-right: 2px solid #c8c8c8; border-bottom: 2px solid #c8c8c8; padding: 0 3px 0 2px; }
.sheet th { height: 31px; font-weight: 400; background: #f8f8f8; text-align: center; white-space: nowrap; overflow: hidden; }
.sheet th.active { background: linear-gradient(#fbe2ac, #f5c46c); color: #7a0a7a; }
.sheet th.th-left { text-align: left; padding-left: 4px; }
.sheet th.th-left small { font-family: "Liberation Mono", monospace; font-size: 12px; line-height: 1; }
.sheet th.th-right { text-align: right; padding: 0; border-right: 0; }
.r44 td { height: 44px; }
.r43 td { height: 43px; }
.r29 td { height: 29px; }
.sheet td { background: #ccffd6; color: #111; }
.sheet .blank td { background: #fff; }
.sheet td.rh { background: linear-gradient(90deg, #fdfdfd, #eaeaea); text-align: left; padding-left: 15px; font-family: "Liberation Mono", monospace; font-size: 16px; }
.sheet td.rh.cur { background: #ffd58a; color: #7a0a7a; }
.sheet td.name { border-right: 2px solid #1a1a1a; }
.sheet td.n, .sheet .n { font-family: "Liberation Mono", monospace; font-size: 15px; letter-spacing: .2px; }
.sheet span.n { line-height: 1; }
.sheet td.formula { word-break: break-all; line-height: 17px; }
.sheet td.tight { letter-spacing: 0; padding-left: 4px; }
.sheet td.shape { padding: 0; }
.sheet td.shape svg { display: block; }
.dim-red, .dim-blk { font-family: "Liberation Mono", monospace; font-size: 15px; text-anchor: middle; }
.dim-red { fill: #f02020; }
.dim-blk { fill: #111; }
.sheet td.focus { background: #aeead6; outline: 2px dotted #7d5f7d; outline-offset: -2px; }

.vscroll { flex: none; width: 27px; position: relative; background: #f4f4f4; display: flex; flex-direction: column; align-items: center; }
.chev { flex: none; width: 14px; height: 10px; display: block; }
.chev-up { margin-top: 10px; }
.thumb-v { flex: none; width: 22px; height: 139px; margin-top: 121px; background: #c8c8c8; }
.chev-dn { margin-top: 9px; }
.hscroll { flex: none; width: 1366px; height: 17px; background: #f0f0f0; display: flex; align-items: center; }
.chev-h { flex: none; width: 10px; height: 14px; display: block; }
.chev-l { margin-left: 8px; }
.thumb-h { flex: none; align-self: stretch; width: 358px; margin-left: 276px; background: #cacaca; }
.chev-r { margin-left: auto; margin-right: 9px; }

/* overlays */
.marks { position: absolute; left: 0; top: 0; pointer-events: none; }
.watermark { position: absolute; left: 1034px; top: 755px; color: rgba(100, 100, 100, .5); white-space: nowrap; font-family: "Noto Sans", "Noto Sans CJK SC", sans-serif; line-height: 1; }
.wm-1 { font-size: 29px; padding-top: 3px; letter-spacing: 1px; }
.wm-2 { font-size: 20.500px; margin-top: 11px; letter-spacing: .9px; }
```
